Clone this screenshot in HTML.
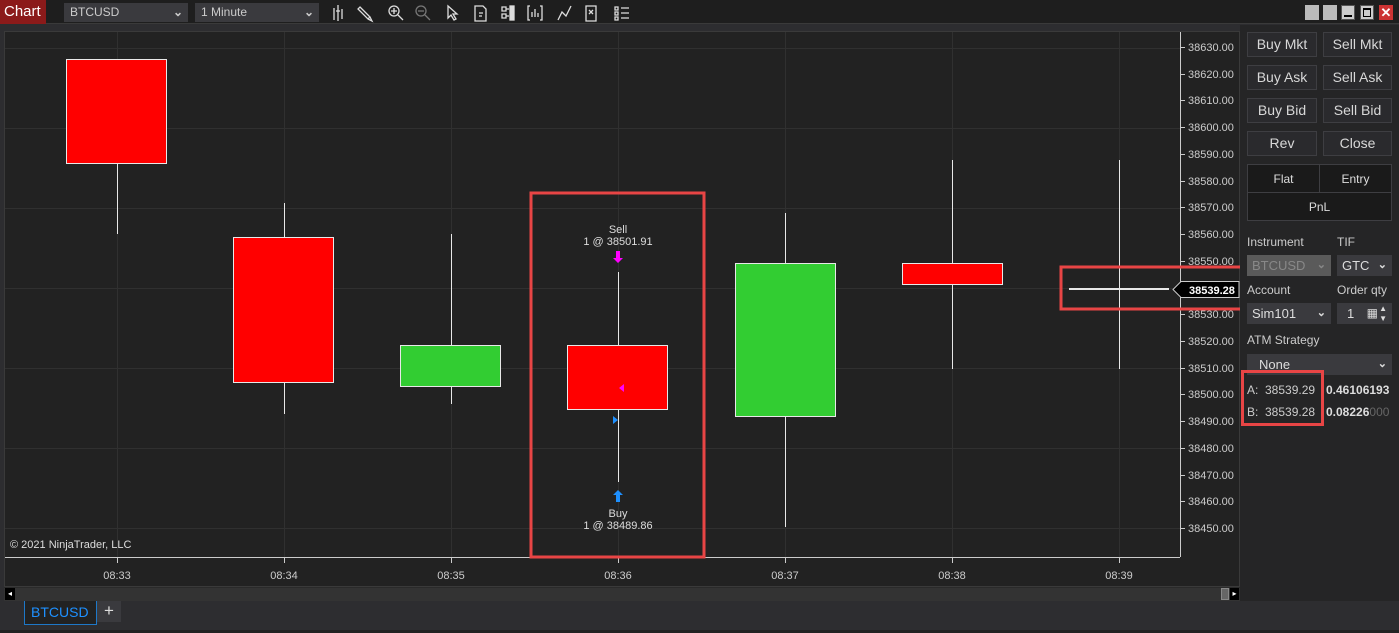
<!DOCTYPE html>
<html><head><meta charset="utf-8"><style>
*{margin:0;padding:0;box-sizing:border-box}
body{width:1399px;height:633px;background:#2d2d30;font-family:"Liberation Sans",sans-serif;position:relative;overflow:hidden;color:#ddd}
.a{position:absolute}
.btn{position:absolute;background:#2a2a2d;border:1px solid #3e3e42;color:#d8d8d8;font-size:14px;text-align:center;line-height:23px;height:25px}
.lbl{position:absolute;font-size:12px;color:#ccc}
.dd{position:absolute;background:#3a3a3e;height:21px;font-size:13px;color:#ddd;line-height:21px;padding-left:5px}
.dd span{position:absolute;right:5px;top:0;font-size:11px;font-weight:bold}
</style></head><body>
<!-- top bar -->
<div class="a" style="left:0;top:0;width:1399px;height:24px;background:#1e1e1e;border-bottom:1px solid #3a3a3a"></div>
<div class="a" style="left:0;top:0;width:46px;height:24px;background:#8b1a1a;color:#fff;font-size:15px;line-height:24px;padding-left:4px">Chart</div>
<div class="a" style="left:64px;top:3px;width:124px;height:19px;background:#3a3a3e;font-size:12px;line-height:19px;padding-left:6px;color:#ccc">BTCUSD<span style="position:absolute;right:5px;font-weight:bold">&#8964;</span></div>
<div class="a" style="left:195px;top:3px;width:124px;height:19px;background:#3a3a3e;font-size:12px;line-height:19px;padding-left:6px;color:#ccc">1 Minute<span style="position:absolute;right:5px;font-weight:bold">&#8964;</span></div>
<svg class="a" style="left:330px;top:3px" width="310" height="20" fill="none" stroke="#ddd" stroke-width="1.3">
<path d="M4 5v12M8 2v16M12 6v10M6 8h4"/>
<path d="M30 4l10 10-2 2-10-10zM40 14l2 4-4-2"/>
<circle cx="64" cy="8" r="5"/><path d="M68 12l5 5M61 8h6M64 5v6"/>
<circle cx="91" cy="8" r="5" stroke="#777"/><path d="M95 12l5 5M88 8h6" stroke="#777"/>
<path d="M118 3v12l3-3 3 5 2-1-3-5h4z"/>
<path d="M145 3h8l3 3v12h-11zM149 10h4M149 13h3"/>
<path d="M172 4h4v4h-4zM172 11h4v4h-4zM176 6h3M176 13h3" /><rect x="180" y="3" width="4" height="14" fill="#ddd"/>
<path d="M200 3h-2v14h2M210 3h2v14h-2M202 14v-5M205 14v-8M208 14v-4"/>
<path d="M228 17l4-8 4 4 5-10"/>
<path d="M256 3h10v15h-10zM259 7l4 4M263 7l-4 4"/>
<path d="M285 4h3v3h-3zM285 9h3v3h-3zM285 14h3v3h-3zM291 5h8M291 10h8M291 15h8"/>
</svg>
<div class="a" style="left:1305px;top:5px;width:14px;height:15px;background:#bbb"></div>
<div class="a" style="left:1323px;top:5px;width:14px;height:15px;background:#bbb"></div>
<div class="a" style="left:1341px;top:5px;width:14px;height:15px;background:#ccc;border:1px solid #555"><div style="position:absolute;left:2px;bottom:2px;width:8px;height:2px;background:#000"></div></div>
<div class="a" style="left:1360px;top:5px;width:14px;height:15px;background:#ccc;border:1px solid #555"><div style="position:absolute;left:2px;top:2px;width:8px;height:9px;border:1px solid #000;border-top-width:2px"></div></div>
<div class="a" style="left:1379px;top:5px;width:14px;height:15px;background:#c33;color:#fff;font-size:13px;font-weight:bold;line-height:15px;text-align:center">✕</div>

<!-- chart -->
<svg class="a" style="left:0;top:24px" width="1240" height="563" font-family="Liberation Sans" font-size="11">
<rect x="4.5" y="7.5" width="1235" height="555" fill="#222222" stroke="#3a3a3a"/>
<g stroke="#303030" stroke-width="1">
<path d="M5 24.5H1180M5 104.5H1180M5 184.5H1180M5 264.5H1180M5 344.5H1180M5 424.5H1180M5 504.5H1180"/>
<path d="M117.5 8V533M284.5 8V533M451.5 8V533M618.5 8V533M785.5 8V533M952.5 8V533M1119.5 8V533"/>
</g>
<path d="M1180.5 8V533M5 533.5H1180" stroke="#ccc"/>
<g stroke="#ccc"><path d="M117.5 533v6M284.5 533v6M451.5 533v6M618.5 533v6M785.5 533v6M952.5 533v6M1119.5 533v6"/></g>
<g fill="#ccc" text-anchor="middle" font-size="11">
<text x="117" y="555">08:33</text><text x="284" y="555">08:34</text><text x="451" y="555">08:35</text><text x="618" y="555">08:36</text><text x="785" y="555">08:37</text><text x="952" y="555">08:38</text><text x="1119" y="555">08:39</text>
</g>
<g fill="#ccc" font-size="11">
<text x="1188" y="27">38630.00</text><text x="1188" y="54">38620.00</text><text x="1188" y="80">38610.00</text><text x="1188" y="107">38600.00</text><text x="1188" y="134">38590.00</text><text x="1188" y="161">38580.00</text><text x="1188" y="187">38570.00</text><text x="1188" y="214">38560.00</text><text x="1188" y="241">38550.00</text><text x="1188" y="294">38530.00</text><text x="1188" y="321">38520.00</text><text x="1188" y="348">38510.00</text><text x="1188" y="374">38500.00</text><text x="1188" y="401">38490.00</text><text x="1188" y="428">38480.00</text><text x="1188" y="455">38470.00</text><text x="1188" y="481">38460.00</text><text x="1188" y="508">38450.00</text>
</g>
<g stroke="#ccc"><path d="M1180 23.5h5M1180 50.5h5M1180 76.5h5M1180 103.5h5M1180 130.5h5M1180 157.5h5M1180 183.5h5M1180 210.5h5M1180 237.5h5M1180 290.5h5M1180 317.5h5M1180 344.5h5M1180 370.5h5M1180 397.5h5M1180 424.5h5M1180 451.5h5M1180 477.5h5M1180 504.5h5"/></g>
<g stroke="#e8e8e8" stroke-width="1">
<path d="M117.5 139V210M284.5 179V390M451.5 210V380M618.5 248V458M785.5 189V503M952.5 136V345M1119.5 136V345"/>
<rect x="66.5" y="35.5" width="100" height="104" fill="#ff0000"/>
<rect x="233.5" y="213.5" width="100" height="145" fill="#ff0000"/>
<rect x="400.5" y="321.5" width="100" height="41" fill="#32cd32"/>
<rect x="567.5" y="321.5" width="100" height="64" fill="#ff0000"/>
<rect x="735.5" y="239.5" width="100" height="153" fill="#32cd32"/>
<rect x="902.5" y="239.5" width="100" height="21" fill="#ff0000"/>
<path d="M1069 265H1169" stroke-width="2"/>
</g>
<path d="M616 227h4v7h3l-5 5-5-5h3z" fill="#ff00ff"/>
<path d="M616 478h4v-7h3l-5-5-5 5h3z" fill="#1e90ff"/>
<path d="M624 360l-5 4 5 4z" fill="#ff00ff"/>
<path d="M613 392l5 4-5 4z" fill="#1e90ff"/>
<g fill="#ddd" text-anchor="middle"><text x="618" y="209">Sell</text><text x="618" y="221">1 @ 38501.91</text><text x="618" y="493">Buy</text><text x="618" y="505">1 @ 38489.86</text></g>
<text x="10" y="524" fill="#ddd">© 2021 NinjaTrader, LLC</text>
<path d="M1173 265.5l8-8h58v16h-58z" fill="#000" stroke="#ccc"/>
<text x="1189" y="270" fill="#fff" font-weight="bold" font-size="11">38539.28</text>
<g fill="none" stroke="#e84545" stroke-width="3">
<rect x="531" y="169" width="173" height="364"/>
<rect x="1061" y="243" width="186" height="42"/>
</g>
</svg>
<!-- scrollbar -->
<div class="a" style="left:4px;top:587px;width:1236px;height:14px;background:#333;border-top:1px solid #2a2a2a"></div>
<div class="a" style="left:5px;top:588px;width:10px;height:12px;background:#000;color:#fff;font-size:8px;line-height:12px;text-align:center">◂</div>
<div class="a" style="left:1221px;top:588px;width:8px;height:12px;background:#666;border:1px solid #888"></div>
<div class="a" style="left:1230px;top:588px;width:9px;height:12px;background:#000;color:#fff;font-size:8px;line-height:12px;text-align:center">▸</div>

<!-- right panel -->
<div class="a" style="left:1240px;top:25px;width:159px;height:576px;background:#252526"></div>
<!-- tabs -->
<div class="a" style="left:24px;top:601px;width:73px;height:24px;background:#222;border:1px solid #1e78c8;border-top:none;color:#1e90ff;font-size:14px;line-height:22px;padding-left:6px">BTCUSD</div>
<div class="a" style="left:97px;top:601px;width:24px;height:21px;background:#3a3a3e;color:#ddd;font-size:17px;line-height:20px;text-align:center">+</div>
<div class="a" style="left:0;top:630px;width:1399px;height:3px;background:#222"></div>
<div class="btn" style="left:1247px;top:32px;width:70px">Buy Mkt</div>
<div class="btn" style="left:1323px;top:32px;width:69px">Sell Mkt</div>
<div class="btn" style="left:1247px;top:65px;width:70px">Buy Ask</div>
<div class="btn" style="left:1323px;top:65px;width:69px">Sell Ask</div>
<div class="btn" style="left:1247px;top:98px;width:70px">Buy Bid</div>
<div class="btn" style="left:1323px;top:98px;width:69px">Sell Bid</div>
<div class="btn" style="left:1247px;top:131px;width:70px">Rev</div>
<div class="btn" style="left:1323px;top:131px;width:69px">Close</div>
<div class="a" style="left:1247px;top:164px;width:145px;height:57px;background:#1a1a1a;border:1px solid #3e3e42"></div>
<div class="a" style="left:1319px;top:165px;width:1px;height:27px;background:#3e3e42"></div>
<div class="a" style="left:1248px;top:192px;width:143px;height:1px;background:#3e3e42"></div>
<div class="lbl" style="left:1248px;top:172px;width:71px;text-align:center;color:#ddd">Flat</div>
<div class="lbl" style="left:1320px;top:172px;width:71px;text-align:center;color:#ddd">Entry</div>
<div class="lbl" style="left:1248px;top:200px;width:143px;text-align:center;color:#ddd">PnL</div>
<div class="lbl" style="left:1247px;top:235px">Instrument</div>
<div class="lbl" style="left:1337px;top:235px">TIF</div>
<div class="dd" style="left:1247px;top:255px;width:84px;background:#5a5a5a;color:#888">BTCUSD<span>&#8964;</span></div>
<div class="dd" style="left:1337px;top:255px;width:55px">GTC<span>&#8964;</span></div>
<div class="lbl" style="left:1247px;top:283px">Account</div>
<div class="lbl" style="left:1337px;top:283px">Order qty</div>
<div class="dd" style="left:1247px;top:303px;width:84px">Sim101<span>&#8964;</span></div>
<div class="dd" style="left:1337px;top:303px;width:55px;padding-left:10px">1<span style="right:14px;font-size:12px;font-weight:normal">▦</span><span style="font-size:8px;line-height:10px;top:1px;font-weight:normal">▲<br>▼</span></div>
<div class="lbl" style="left:1247px;top:333px">ATM Strategy</div>
<div class="dd" style="left:1247px;top:354px;width:145px;padding-left:12px">None<span>&#8964;</span></div>
<div class="lbl" style="left:1247px;top:383px;font-size:12px">A:&nbsp; 38539.29</div>
<div class="lbl" style="left:1247px;top:405px;font-size:12px">B:&nbsp; 38539.28</div>
<div class="lbl" style="left:1326px;top:383px;font-weight:bold;color:#ddd">0.46106193</div>
<div class="lbl" style="left:1326px;top:405px;font-weight:bold;color:#ddd">0.08226<span style="color:#666;font-weight:normal">000</span></div>
<div class="a" style="left:1241px;top:370px;width:83px;height:56px;border:3px solid #e84545"></div>
</body></html>
